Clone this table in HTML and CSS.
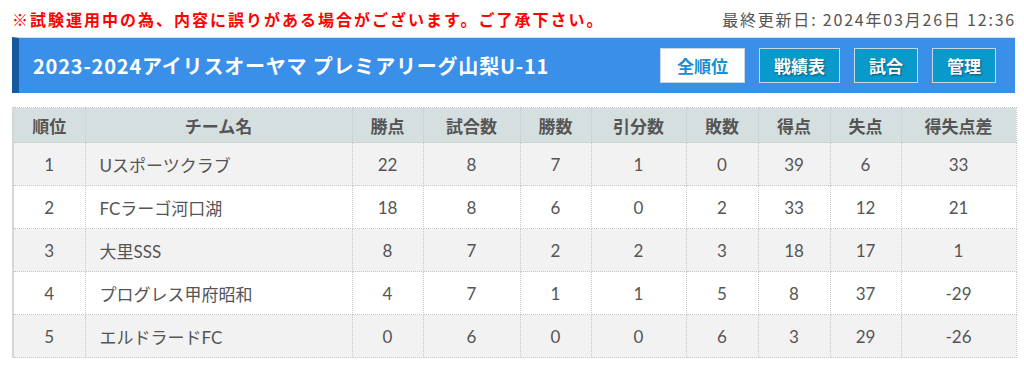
FILE: index.html
```html
<!DOCTYPE html>
<html lang="ja">
<head>
<meta charset="utf-8">
<link rel="stylesheet" href="styles.css">
</head>
<body>
<div class="page">
  <div class="topline">
    <p class="notice">※試験運用中の為、内容に誤りがある場合がございます。ご了承下さい。</p>
    <p class="updated">最終更新日: 2024年03月26日 12:36</p>
  </div>
  <div class="titlebar">
    <h1 class="title">2023-2024アイリスオーヤマ プレミアリーグ山梨U-11</h1>
    <nav class="nav">
      <a class="btn btn-active">全順位</a>
      <a class="btn">戦績表</a>
      <a class="btn">試合</a>
      <a class="btn">管理</a>
    </nav>
  </div>
  <table class="standings">
    <colgroup>
      <col class="c-rank"><col class="c-team"><col class="c-pts"><col class="c-gp"><col class="c-w"><col class="c-d"><col class="c-l"><col class="c-gf"><col class="c-ga"><col class="c-gd">
    </colgroup>
    <thead>
      <tr><th>順位</th><th>チーム名</th><th>勝点</th><th>試合数</th><th>勝数</th><th>引分数</th><th>敗数</th><th>得点</th><th>失点</th><th>得失点差</th></tr>
    </thead>
    <tbody>
      <tr><td>1</td><td class="team">Uスポーツクラブ</td><td>22</td><td>8</td><td>7</td><td>1</td><td>0</td><td>39</td><td>6</td><td>33</td></tr>
      <tr><td>2</td><td class="team">FCラーゴ河口湖</td><td>18</td><td>8</td><td>6</td><td>0</td><td>2</td><td>33</td><td>12</td><td>21</td></tr>
      <tr><td>3</td><td class="team">大里SSS</td><td>8</td><td>7</td><td>2</td><td>2</td><td>3</td><td>18</td><td>17</td><td>1</td></tr>
      <tr><td>4</td><td class="team">プログレス甲府昭和</td><td>4</td><td>7</td><td>1</td><td>1</td><td>5</td><td>8</td><td>37</td><td>-29</td></tr>
      <tr><td>5</td><td class="team">エルドラードFC</td><td>0</td><td>6</td><td>0</td><td>0</td><td>6</td><td>3</td><td>29</td><td>-26</td></tr>
    </tbody>
  </table>
</div>
</body>
</html>
```

FILE: styles.css
```css
html, body {
  margin: 0;
  padding: 0;
  background: #fff;
}
body {
  font-family: Lato, "Noto Sans CJK JP", sans-serif;
  color: #555;
}
.page {
  width: 1003px;
  margin-left: 12px;
}
.topline {
  display: flex;
  justify-content: space-between;
  align-items: center;
  height: 37px;
}
.notice {
  margin: 0;
  color: #f00;
  font-weight: bold;
  font-size: 16px;
  letter-spacing: 2px;
  font-family: "Noto Sans CJK JP", sans-serif;
}
.updated {
  margin: 0;
  font-size: 16px;
  letter-spacing: 1.8px;
  margin-right: -1px;
  color: #555;
  font-family: "Noto Sans CJK JP", sans-serif;
}
.titlebar {
  display: flex;
  align-items: center;
  justify-content: space-between;
  height: 56px;
  box-sizing: border-box;
  background: #3a8fe9;
  border-left: 7px solid #17599f;
  border-top: 1px solid #cfe0f3;
  padding: 0 19px 0 14px;
}
.title {
  margin: 0;
  color: #fff;
  font-size: 20px;
  font-weight: bold;
  font-family: "Noto Sans CJK JP", sans-serif;
  letter-spacing: 0.8px;
}
.nav {
  display: flex;
  gap: 14px;
}
.btn {
  display: flex;
  align-items: center;
  justify-content: center;
  height: 35px;
  box-sizing: border-box;
  padding: 0 14px;
  background: #0999cb;
  border: 1px solid #c8d8e2;
  color: #fff;
  font-weight: bold;
  font-size: 17px;
  font-family: "Noto Sans CJK JP", sans-serif;
  text-shadow: 1px 1px 2px rgba(0,0,0,0.45);
}
.btn-active {
  background: #fff;
  color: #1a8fd0;
  text-shadow: none;
  padding: 0 16px;
}
.standings {
  margin-top: 14px;
  width: 1003px;
  border-collapse: collapse;
  table-layout: fixed;
  font-size: 17px;
  border-left: 2px solid #d6d6d6;
}
.c-rank { width: 72px; }
.c-team { width: 267px; }
.c-pts { width: 71px; }
.c-gp { width: 97px; }
.c-w { width: 71px; }
.c-d { width: 95px; }
.c-l { width: 72px; }
.c-gf { width: 72px; }
.c-ga { width: 71px; }
.c-gd { width: 115px; }
.standings th {
  height: 34px;
  padding: 0;
  background: #d5dfdf;
  font-weight: bold;
  color: #555;
  font-family: "Noto Sans CJK JP", sans-serif;
  border: 1px dotted #c8c8c8;
  text-align: center;
}
.standings td {
  height: 42px;
  padding: 0;
  text-align: center;
  border: 1px dotted #c8c8c8;
}
.standings tbody tr:nth-child(odd) td {
  background: #f2f2f2;
}
.standings td.team {
  text-align: left;
  padding-left: 14px;
}
```
